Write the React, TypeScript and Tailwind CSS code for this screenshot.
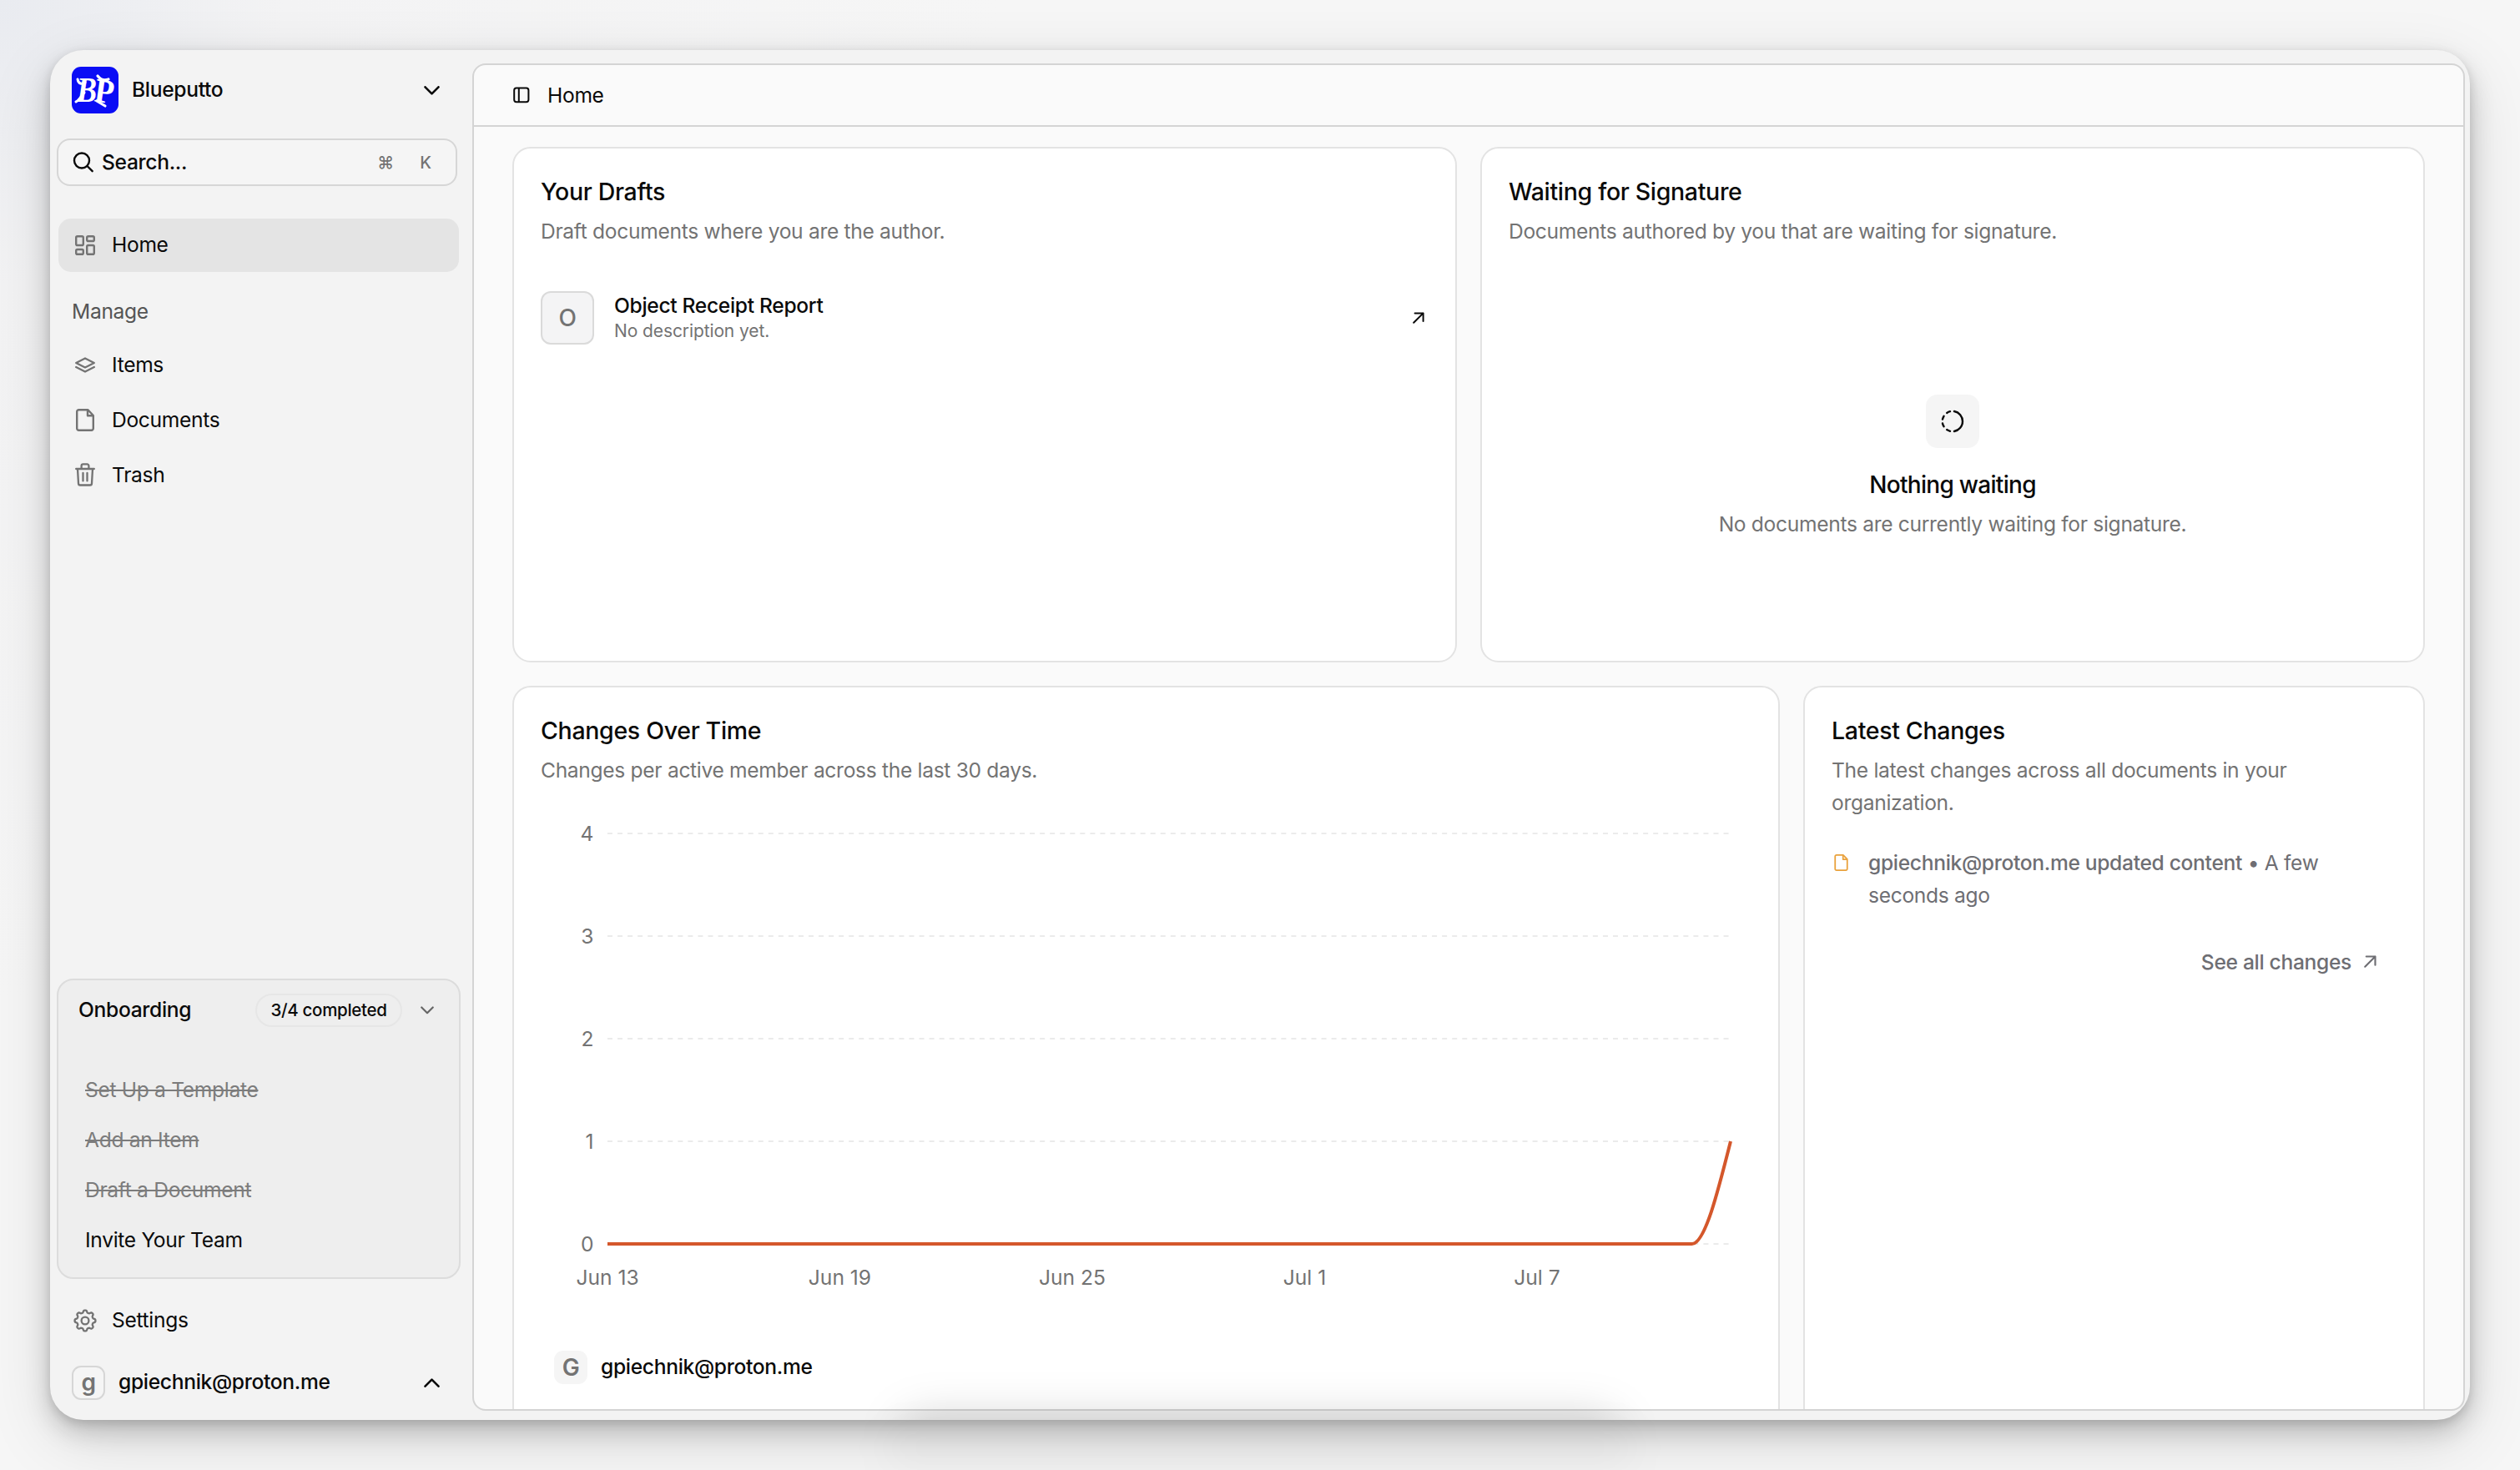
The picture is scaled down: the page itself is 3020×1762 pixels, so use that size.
import type { ReactNode } from "react";

const navItems = [
  { label: "Items", icon: <LayersIcon /> },
  { label: "Documents", icon: <FileIcon className="w-[22px] h-[27px]" /> },
  { label: "Trash", icon: <TrashIcon /> },
];

const steps = [
  { label: "Set Up a Template", done: true },
  { label: "Add an Item", done: true },
  { label: "Draft a Document", done: true },
  { label: "Invite Your Team", done: false },
];

export default function App() {
  return (
    <div className="relative w-[3020px] h-[1762px] overflow-hidden bg-[radial-gradient(circle_at_0_0,#e9ebf0_0,#f3f3f4_340px,#f6f6f6_1200px)] p-[60px] font-['Inter',sans-serif] text-[24.6px] tracking-[-0.013em] text-[#0a0a0a]">
      <div className="relative flex w-[2900px] h-[1642px] rounded-[40px] bg-[#f3f3f3] overflow-hidden shadow-[0_4px_12px_rgba(0,0,0,0.12),0_14px_30px_rgba(0,0,0,0.18),0_24px_80px_rgba(0,0,0,0.12)]">
        <Sidebar />
        <main className="mt-4 w-[2388px] h-[1615px] rounded-2xl border-2 border-[#d4d4d4] bg-[#fafafa] overflow-hidden">
          <header className="flex items-center h-[74px] pl-[47px] border-b-2 border-[#d4d4d4]">
            <PanelIcon />
            <span className="ml-[21px]">Home</span>
          </header>
          <div className="pt-6 pl-[46px] pr-[46px] flex flex-col gap-7">
            <div className="flex gap-7">
              <DraftsCard />
              <WaitingCard />
            </div>
            <div className="flex gap-7">
              <ChartCard />
              <LatestCard />
            </div>
          </div>
        </main>
        <div className="absolute left-[1020px] top-[1636px] w-[860px] h-[60px] rounded-full bg-black/15 blur-[26px]" />
      </div>
      <div className="absolute left-[1060px] top-[1715px] w-[900px] h-[40px] rounded-full bg-black/4 blur-[24px]" />
    </div>
  );
}

function Sidebar() {
  return (
    <aside className="flex flex-col w-[506px] shrink-0 pl-2">
      <div className="flex items-center h-[96px] pl-[18px] pr-[39px]">
        <Logo />
        <span className="ml-4 -mt-px font-medium">Blueputto</span>
        <Chevron className="ml-auto w-[19px] h-[11px]" />
      </div>

      <div className="mt-[10px] flex items-center w-[480px] h-[57px] rounded-2xl border-2 border-[#d6d6d6] bg-[#f5f5f5] pl-[17px]">
        <SearchIcon />
        <span className="ml-[9px] font-medium">Search...</span>
        <div className="ml-auto flex text-[20px] font-medium text-[#737373]">
          <span className="w-12 text-center">⌘</span>
          <span className="w-12 mr-[12px] text-center">K</span>
        </div>
      </div>

      <div className="mt-[39px] ml-[2px] flex items-center w-[480px] h-[64px] rounded-[15px] bg-[#e4e4e4]">
        <span className="flex justify-center w-16">
          <DashboardIcon />
        </span>
        <span className="-mt-px">Home</span>
      </div>

      <p className="mt-[15px] ml-[18px] flex items-center h-[64px] text-[#555]">
        Manage
      </p>
      <nav className="-mt-px ml-[2px]">
        {navItems.map((item) => (
          <div key={item.label} className="flex items-center h-[66px]">
            <span className="flex justify-center w-16">{item.icon}</span>
            <span>{item.label}</span>
          </div>
        ))}
      </nav>

      <div className="mt-auto w-[484px] h-[360px] rounded-[20px] border-2 border-[#dcdcdc] bg-[#eeeeee]">
        <div className="flex items-center h-[72px] pl-[24px] pr-[30px]">
          <span className="-mt-px font-medium">Onboarding</span>
          <span className="ml-auto flex items-center justify-center w-[176px] h-[40px] rounded-full border-2 border-[#e6e6e6] text-[20.5px] font-medium">
            3/4 completed
          </span>
          <Chevron className="ml-[22px] w-[16px] h-[10px] text-[#666]" />
        </div>
        <div className="mt-[29px] pl-8">
          {steps.map((step) => (
            <div
              key={step.label}
              className={`flex items-center h-[60px] ${
                step.done ? "text-[#7c7c7c] line-through" : ""
              }`}
            >
              {step.label}
            </div>
          ))}
        </div>
      </div>

      <div className="mt-[17px] ml-[2px] flex items-center h-[66px]">
        <span className="flex justify-center w-16">
          <GearIcon />
        </span>
        <span className="-mt-px">Settings</span>
      </div>
      <div className="mt-[8px] mb-3 flex items-center h-[66px] pl-[18px] pr-[39px]">
        <span className="flex items-center justify-center w-[40px] h-[41px] rounded-[11px] border-2 border-[#d6d6d6] bg-[#f5f5f5] text-[28px] font-semibold text-[#737373]">
          g
        </span>
        <span className="ml-4 -mt-px font-medium">gpiechnik@proton.me</span>
        <Chevron className="ml-auto w-[19px] h-[11px] rotate-180" />
      </div>
    </aside>
  );
}

function Card({
  title,
  description,
  className,
  children,
}: {
  title: string;
  description: string;
  className: string;
  children: ReactNode;
}) {
  return (
    <section
      className={`shrink-0 rounded-[22px] border-2 border-[#e3e3e3] bg-white px-8 pt-8 ${className}`}
    >
      <h2 className="flex items-center h-10 text-[28.5px] font-medium">
        {title}
      </h2>
      <p className="mt-[8px] leading-[39.4px] text-[#737373]">{description}</p>
      {children}
    </section>
  );
}

function DraftsCard() {
  return (
    <Card
      title="Your Drafts"
      description="Draft documents where you are the author."
      className="w-[1132px] h-[618px]"
    >
      <div className="mt-[52px] flex items-center pr-[5px]">
        <span className="flex items-center justify-center size-16 rounded-[12px] border-2 border-[#dadada] bg-[#f4f4f5] text-[28px] font-medium text-[#737373]">
          O
        </span>
        <div className="ml-6">
          <p className="leading-[32px] font-medium">Object Receipt Report</p>
          <p className="leading-[30px] text-[21px] tracking-[-0.005em] text-[#737373]">
            No description yet.
          </p>
        </div>
        <ArrowIcon className="ml-auto size-[14px]" />
      </div>
    </Card>
  );
}

function WaitingCard() {
  return (
    <Card
      title="Waiting for Signature"
      description="Documents authored by you that are waiting for signature."
      className="w-[1132px] h-[618px]"
    >
      <div className="mt-[176px] flex flex-col items-center">
        <span className="flex items-center justify-center size-16 rounded-[14px] bg-[#f5f5f5]">
          <ProgressIcon />
        </span>
        <h3 className="mt-[24px] leading-[40px] text-[28px] font-medium tracking-tight">
          Nothing waiting
        </h3>
        <p className="mt-[7px] leading-[40px] text-[#737373]">
          No documents are currently waiting for signature.
        </p>
      </div>
    </Card>
  );
}

function ChartCard() {
  const left = 80;
  const right = 1426;
  const top = 16;
  const rowHeight = 123;
  const dayWidth = (right - left) / 29;
  const base = top + rowHeight * 4;
  const lastFlat = right - dayWidth;
  const ticks = ["Jun 13", "Jun 19", "Jun 25", "Jul 1", "Jul 7"];

  return (
    <Card
      title="Changes Over Time"
      description="Changes per active member across the last 30 days."
      className="w-[1519px] h-[900px]"
    >
      <svg
        width="1450"
        height="600"
        viewBox="0 0 1450 600"
        className="mt-[40px] fill-[#737373] text-[24.6px] tracking-normal"
      >
        {[4, 3, 2, 1, 0].map((value, i) => (
          <g key={value}>
            <text x="63.5" y={top + i * rowHeight + 9} textAnchor="end">
              {value}
            </text>
            <line
              x1={left}
              x2={right}
              y1={top + i * rowHeight}
              y2={top + i * rowHeight}
              stroke="#ebebeb"
              strokeWidth="2"
              strokeDasharray="6 6.05"
            />
          </g>
        ))}
        {ticks.map((tick, i) => (
          <text
            key={tick}
            x={left + i * 6 * dayWidth}
            y={base + 48.5}
            textAnchor="middle"
          >
            {tick}
          </text>
        ))}
        <path
          d={`M${left} ${base}H${lastFlat}C${lastFlat + dayWidth / 3} ${base} ${
            right - dayWidth / 3
          } ${base - rowHeight / 2} ${right} ${base - rowHeight}`}
          fill="none"
          stroke="#d4572b"
          strokeWidth="4"
        />
      </svg>
      <div className="mt-[36px] ml-4 flex items-center">
        <span className="flex items-center justify-center size-10 rounded-[11px] bg-[#f5f5f5] text-[28px] font-semibold text-[#737373]">
          G
        </span>
        <span className="ml-4 -mt-px font-medium">gpiechnik@proton.me</span>
      </div>
    </Card>
  );
}

function LatestCard() {
  return (
    <Card
      title="Latest Changes"
      description="The latest changes across all documents in your organization."
      className="w-[745px] h-[900px]"
    >
      <div className="mt-[32px] flex leading-[39.4px] text-[#6e6e73]">
        <FileIcon className="mt-[9px] ml-[3px] w-[17px] h-[20px] shrink-0 text-[#e9a13b]" />
        <p className="ml-[24px] w-[580px]">
          <span className="font-medium">
            gpiechnik@proton.me updated content
          </span>{" "}
          • A few seconds ago
        </p>
      </div>
      <div className="mt-[39px] flex items-center justify-end pr-[24px] leading-[40px] font-medium text-[#6e6e73]">
        See all changes
        <ArrowIcon className="ml-[15px] size-[15px]" />
      </div>
    </Card>
  );
}

function Logo() {
  return (
    <svg
      width="56"
      height="56"
      viewBox="0 0 56 56"
      className="rounded-[11px] bg-[#0a0df5] fill-white font-['Liberation_Serif',serif] font-bold tracking-normal"
    >
      <text x="6" y="42" fontSize="42" fontStyle="italic" textLength="24" lengthAdjust="spacingAndGlyphs">
        B
      </text>
      <text x="28" y="43" fontSize="41" textLength="23" lengthAdjust="spacingAndGlyphs" transform="rotate(8 40 28)">
        P
      </text>
      {/* blackletter flourishes */}
      <g fill="none" stroke="white" strokeLinecap="round">
        <path d="M7 15c1 6 5 6 9 4M5 42c3-1 6-6 10-11" strokeWidth="3" />
        <path d="M31 11c3 4 8 6 13 4M30 41l10 6" strokeWidth="3.2" />
      </g>
    </svg>
  );
}

function Chevron({ className }: { className: string }) {
  return (
    <svg
      viewBox="0 0 19 11"
      fill="none"
      stroke="currentColor"
      strokeWidth="2.6"
      strokeLinecap="round"
      strokeLinejoin="round"
      className={className}
    >
      <path d="M1.5 1.3 9.5 9.3 17.5 1.3" />
    </svg>
  );
}

function SearchIcon() {
  return (
    <svg
      width="26"
      height="25"
      viewBox="0 0 26 25"
      fill="none"
      stroke="currentColor"
      strokeWidth="2.4"
      strokeLinecap="round"
    >
      <circle cx="11" cy="10.5" r="9" />
      <path d="m17.5 17 6.2 6.2" />
    </svg>
  );
}

function PanelIcon() {
  return (
    <svg
      width="20"
      height="20"
      viewBox="0 0 20 20"
      fill="none"
      stroke="currentColor"
      strokeWidth="2"
    >
      <rect x="1.2" y="1.6" width="17.2" height="16.6" rx="2.6" />
      <path d="M6.8 1.6v16.6" />
    </svg>
  );
}

function DashboardIcon() {
  return (
    <svg
      width="24"
      height="24"
      viewBox="0 0 24 24"
      fill="none"
      stroke="#737373"
      strokeWidth="2.4"
    >
      <rect x="1.2" y="1.2" width="8.6" height="10.8" rx="1.6" />
      <rect x="14.2" y="1.2" width="8.6" height="5.8" rx="1.6" />
      <rect x="1.2" y="17" width="8.6" height="5.8" rx="1.6" />
      <rect x="14.2" y="12" width="8.6" height="10.8" rx="1.6" />
    </svg>
  );
}

function LayersIcon() {
  return (
    <svg
      width="24"
      height="19"
      viewBox="0 0 24 19"
      fill="none"
      stroke="#737373"
      strokeWidth="2.3"
      strokeLinecap="round"
      strokeLinejoin="round"
    >
      <path d="M12 1.4 22.8 6.9 12 12.4 1.2 6.9Z" />
      <path d="M1.2 12 12 17.5 22.8 12" />
    </svg>
  );
}

function FileIcon({ className }: { className: string }) {
  return (
    <svg
      viewBox="0 0 22 27"
      fill="none"
      stroke="currentColor"
      strokeWidth="2.4"
      strokeLinejoin="round"
      className={`${className.includes("text-") ? "" : "text-[#737373]"} ${className}`}
    >
      <path d="M3.4 1.2h10.8l6.6 6.8v15.6a2.2 2.2 0 0 1-2.2 2.2H3.4a2.2 2.2 0 0 1-2.2-2.2V3.4a2.2 2.2 0 0 1 2.2-2.2Z" />
      <path d="M14 1.6v6.6h6.6" />
    </svg>
  );
}

function TrashIcon() {
  return (
    <svg
      width="24"
      height="28"
      viewBox="0 0 24 28"
      fill="none"
      stroke="#737373"
      strokeWidth="2.3"
      strokeLinecap="round"
      strokeLinejoin="round"
    >
      <path d="M1.2 7h21.6M7.6 6.6V3.4a2 2 0 0 1 2-2h4.8a2 2 0 0 1 2 2v3.2M3 7l1 17.6a2 2 0 0 0 2 1.9h12a2 2 0 0 0 2-1.9L21 7" />
      <path d="M9.5 12v9.4M14.5 12v9.4" />
    </svg>
  );
}

function GearIcon() {
  // eight rounded teeth, the first one pointing up
  const points = Array.from({ length: 160 }, (_, i) => {
    const angle = (i / 160) * Math.PI * 2;
    const radius = 11.1 + 1.4 * Math.tanh(1.8 * Math.cos(angle * 8));
    const x = 14 + radius * Math.sin(angle);
    const y = 14 - radius * Math.cos(angle);
    return `${x.toFixed(2)} ${y.toFixed(2)}`;
  });
  return (
    <svg
      width="28"
      height="28"
      viewBox="0 0 28 28"
      fill="none"
      stroke="#737373"
      strokeWidth="2.3"
      strokeLinejoin="round"
    >
      <path d={`M${points.join("L")}Z`} />
      <circle cx="14" cy="14" r="4.4" />
    </svg>
  );
}

function ArrowIcon({ className }: { className: string }) {
  return (
    <svg
      viewBox="0 0 14 14"
      fill="none"
      stroke="currentColor"
      strokeWidth="2"
      strokeLinecap="round"
      strokeLinejoin="round"
      className={className}
    >
      <path d="M1.2 12.8 12.6 1.4M2.6 1.4h10v9.6" />
    </svg>
  );
}

function ProgressIcon() {
  return (
    <svg
      width="28"
      height="28"
      viewBox="-14 -14 28 28"
      fill="none"
      stroke="currentColor"
      strokeWidth="2.4"
      strokeLinecap="round"
    >
      <path d="M2 -12A12.2 12.2 0 0 1 2 12" />
      <path d="M-3 -11.8A12.2 12.2 0 0 0 -6.8 -10.1M-10.5 -6.2A12.2 12.2 0 0 0 -12 -2.4M-12 2.4A12.2 12.2 0 0 0 -10.5 6.2M-6.8 10.1A12.2 12.2 0 0 0 -3 11.8" />
    </svg>
  );
}
